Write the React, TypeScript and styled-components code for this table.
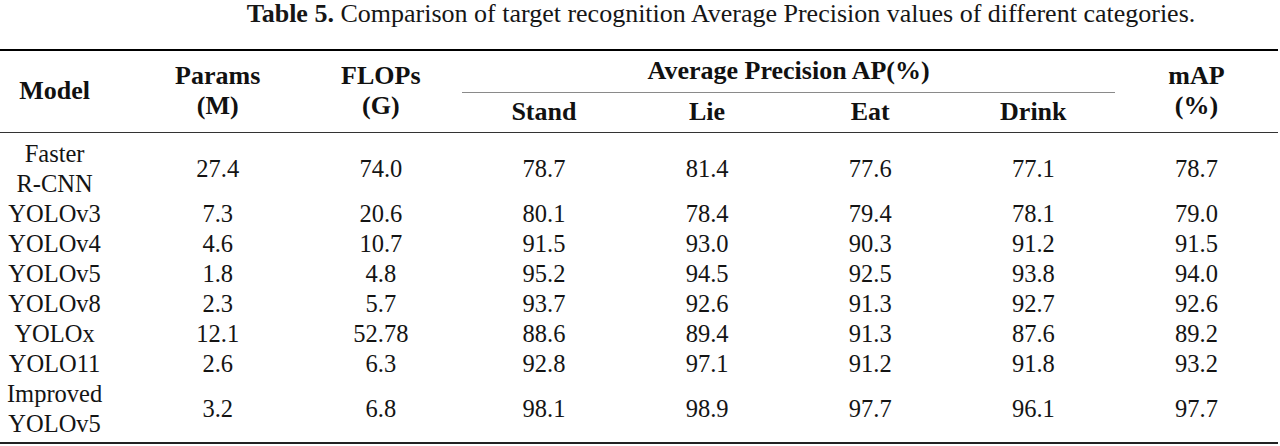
import React from "react";
import styled, { createGlobalStyle } from "styled-components";

const GlobalStyle = createGlobalStyle`
  html, body {
    margin: 0;
    padding: 0;
    background: #ffffff;
    overflow: hidden;
  }
  body {
    font-family: "Liberation Serif", "Times New Roman", serif;
    color: #141414;
  }
`;

const Page = styled.div`
  width: 1280px;
  height: 446px;
  overflow: hidden;
`;

const Caption = styled.div`
  height: 49px;
  box-sizing: border-box;
  padding-left: 162px;
  text-align: center;
  font-size: 26px;
  line-height: 27px;
  color: #161616;
  white-space: nowrap;
`;

const CaptionLabel = styled.b`
  font-weight: 700;
`;

const Table = styled.table`
  margin-left: -27px;
  width: 1305px;
  table-layout: fixed;
  border-collapse: collapse;
  border-top: 2px solid #000;
  border-bottom: 2px solid #222;
  font-size: 24.5px;
`;

const Head = styled.thead`
  border-bottom: 1px solid #333;
`;

const HeadRow = styled.tr<{ $h: number }>`
  height: ${(p) => p.$h}px;
`;

const HeadCell = styled.th<{ $rule?: boolean }>`
  padding: 0;
  font-size: 26px;
  font-weight: 700;
  line-height: 30px;
  text-align: center;
  vertical-align: middle;
  color: #111;
  border-bottom: ${(p) => (p.$rule ? "1px solid #8a8a8a" : "none")};
`;

const Body = styled.tbody`
  tr:first-child td {
    padding-top: 6px;
  }
  tr:last-child td {
    padding-bottom: 3px;
  }
`;

const Cell = styled.td`
  padding: 0;
  line-height: 30px;
  text-align: center;
  vertical-align: middle;
  color: #141414;
`;

type Row = { model: string[]; values: string[] };

const rows: Row[] = [
  { model: ["Faster", "R-CNN"], values: ["27.4", "74.0", "78.7", "81.4", "77.6", "77.1", "78.7"] },
  { model: ["YOLOv3"], values: ["7.3", "20.6", "80.1", "78.4", "79.4", "78.1", "79.0"] },
  { model: ["YOLOv4"], values: ["4.6", "10.7", "91.5", "93.0", "90.3", "91.2", "91.5"] },
  { model: ["YOLOv5"], values: ["1.8", "4.8", "95.2", "94.5", "92.5", "93.8", "94.0"] },
  { model: ["YOLOv8"], values: ["2.3", "5.7", "93.7", "92.6", "91.3", "92.7", "92.6"] },
  { model: ["YOLOx"], values: ["12.1", "52.78", "88.6", "89.4", "91.3", "87.6", "89.2"] },
  { model: ["YOLO11"], values: ["2.6", "6.3", "92.8", "97.1", "91.2", "91.8", "93.2"] },
  { model: ["Improved", "YOLOv5"], values: ["3.2", "6.8", "98.1", "98.9", "97.7", "96.1", "97.7"] },
];

export default function App() {
  return (
    <Page>
      <GlobalStyle />
      <Caption>
        <CaptionLabel>Table 5.</CaptionLabel> Comparison of target recognition Average Precision
        values of different categories.
      </Caption>
      <Table>
        <colgroup>
          {Array.from({ length: 8 }).map((_, i) => (
            <col key={i} />
          ))}
        </colgroup>
        <Head>
          <HeadRow $h={42}>
            <HeadCell rowSpan={2}>Model</HeadCell>
            <HeadCell rowSpan={2}>
              Params
              <br />
              (M)
            </HeadCell>
            <HeadCell rowSpan={2}>
              FLOPs
              <br />
              (G)
            </HeadCell>
            <HeadCell colSpan={4} $rule>
              Average Precision AP(%)
            </HeadCell>
            <HeadCell rowSpan={2}>
              mAP
              <br />
              (%)
            </HeadCell>
          </HeadRow>
          <HeadRow $h={40}>
            <HeadCell>Stand</HeadCell>
            <HeadCell>Lie</HeadCell>
            <HeadCell>Eat</HeadCell>
            <HeadCell>Drink</HeadCell>
          </HeadRow>
        </Head>
        <Body>
          {rows.map((r) => (
            <tr key={r.model.join(" ")}>
              <Cell>
                {r.model.map((line, i) => (
                  <React.Fragment key={line}>
                    {i > 0 && <br />}
                    {line}
                  </React.Fragment>
                ))}
              </Cell>
              {r.values.map((v, i) => (
                <Cell key={i}>{v}</Cell>
              ))}
            </tr>
          ))}
        </Body>
      </Table>
    </Page>
  );
}
